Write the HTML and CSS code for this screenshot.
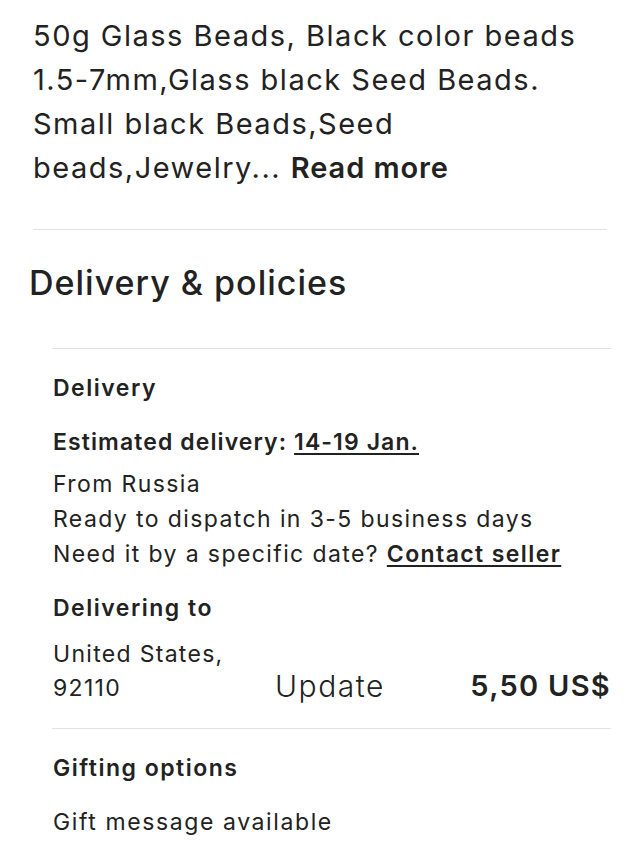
FILE: index.html
```html
<!DOCTYPE html>
<html lang="en">
<head>
<meta charset="utf-8">
<link rel="stylesheet" href="styles.css">
</head>
<body>
<div class="page">
  <p class="desc">50g Glass Beads, Black color beads 1.5-7mm,Glass black Seed Beads. Small black Beads,Seed beads,Jewelry... <a class="more">Read more</a></p>
  <hr class="rule top-rule">
  <h2 class="heading">Delivery &amp; policies</h2>
  <section class="policies">
    <div class="block">
      <h3 class="label">Delivery</h3>
      <p class="est">Estimated delivery: <a class="link">14-19 Jan.</a></p>
      <p class="lines">From Russia<br>Ready to dispatch in 3-5 business days<br>Need it by a specific date? <a class="link">Contact seller</a></p>
      <h3 class="label to">Delivering to</h3>
      <div class="dest">
        <p class="addr">United States,<br>92110</p>
        <span class="update">Update</span>
        <span class="price">5,50 US$</span>
      </div>
    </div>
    <div class="block">
      <h3 class="label">Gifting options</h3>
      <p class="gift">Gift message available</p>
    </div>
  </section>
</div>
</body>
</html>
```
FILE: styles.css
```css
html, body {
  margin: 0;
  padding: 0;
  background: #fff;
}
body {
  font-family: Inter, "Noto Sans", sans-serif;
  color: #222;
}
.page {
  width: 640px;
  height: 844px;
  overflow: hidden;
}
p, h2, h3 { margin: 0; }
.desc {
  margin: 14px 33px 0 33px;
  font-size: 29px;
  line-height: 44px;
  letter-spacing: 1.5px;
  font-weight: 400;
}
.more {
  font-weight: 600;
  letter-spacing: 0.9px;
}
.rule {
  border: 0;
  height: 1px;
  background: #e1e1e1;
  margin: 0;
}
.top-rule {
  margin: 39px 33px 0 33px;
}
.heading {
  margin: 31px 0 0 29px;
  font-size: 34px;
  line-height: 44px;
  letter-spacing: 1px;
  font-weight: 500;
}
.policies {
  margin: 43px 29px 0 52px;
}
.block {
  border-top: 1px solid #e1e1e1;
  padding: 24px 0 23px 1px;
}
.label {
  font-size: 23px;
  line-height: 30px;
  font-weight: 600;
  letter-spacing: 1.5px;
}
.est {
  margin-top: 24px;
  font-size: 23px;
  line-height: 30px;
  font-weight: 600;
  letter-spacing: 1.1px;
}
.link {
  text-decoration: underline;
  text-underline-offset: 3px;
  text-decoration-thickness: 2px;
  font-weight: 600;
}
.lines {
  margin-top: 10px;
  font-size: 23px;
  line-height: 35px;
  letter-spacing: 1.4px;
}
.lines .link { letter-spacing: 1.4px; }
.to { margin-top: 21px; }
.dest {
  margin-top: 14px;
  display: flex;
  align-items: flex-end;
}
.addr {
  font-size: 23px;
  line-height: 34px;
  letter-spacing: 1.3px;
  width: 222px;
}
.update {
  font-size: 30px;
  line-height: 38px;
  letter-spacing: 1.5px;
  font-weight: 300;
  flex: 1;
}
.price {
  font-size: 29px;
  line-height: 38px;
  letter-spacing: 1.3px;
  font-weight: 600;
}
.gift {
  margin-top: 24px;
  font-size: 23px;
  line-height: 30px;
  letter-spacing: 1.6px;
}
```
